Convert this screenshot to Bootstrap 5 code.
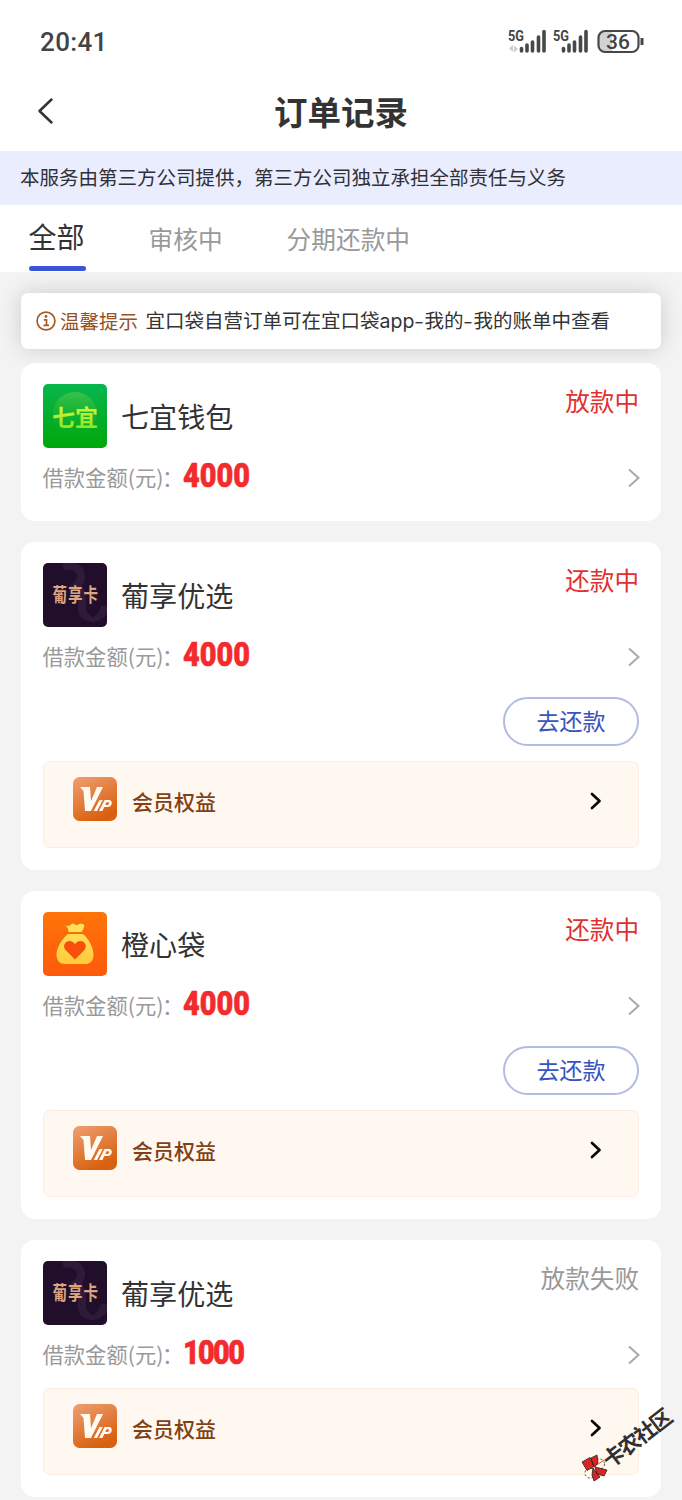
<!DOCTYPE html>
<html lang="zh-CN">
<head>
<meta charset="utf-8">
<meta name="viewport" content="width=device-width, initial-scale=1">
<title>订单记录</title>
<link href="https://cdn.jsdelivr.net/npm/bootstrap@5.3.0/dist/css/bootstrap.min.css" rel="stylesheet">
<style>
body{font-family:"Noto Sans CJK SC",sans-serif;background:#f3f3f3;color:#333;height:1500px;overflow:hidden;line-height:1}
svg{display:block;flex:none}
svg text{font-family:"Noto Sans CJK SC",sans-serif}
.statusbar{height:83px;padding:0 38px 0 40px}
.clock{font:500 26px/1 Roboto,sans-serif;letter-spacing:.35px;color:#444}
.titlebar{height:68px;padding-bottom:12px}
.titlebar h1{font-size:33.5px;font-weight:700;line-height:40px}
.back{left:37px;top:14px}
.notice{height:54px;background:#eaedfe;padding:0 0 2px 20px;font-size:19.5px;color:#303136}
.tabs{height:67px;font-size:24.7px;color:#999;padding-left:28.5px;gap:64px}
.tabs .tab{padding-top:15px;line-height:36px;height:67px}
.tabs .on{font-size:28px;color:#333;padding-top:13px;width:56px}
.tabs .on::after{content:"";display:block;height:5px;border-radius:3px;background:#3c52d8;margin-top:12px;width:57px}
.tip{margin:21px 21px 14px;height:56px;border-radius:7px;box-shadow:0 0 22px rgba(0,0,0,.16);padding:0 0 1px 15px;font-size:19.5px}
.tip .hint{color:#98501f;margin:0 7.5px 0 4px}
.latin{font-family:Inter,"Noto Sans CJK SC",sans-serif}
.dash{display:inline-block;width:10px;text-align:center;transform:scaleX(1.4)}
.orders{padding:0 21px;gap:21px}
.order{border:0;border-radius:14px;padding:21px 22px 22px 21.5px}
.order>.head{height:64px;gap:14.5px}
.name{font-size:28.1px;line-height:63px}
.state{font-size:24.6px;line-height:33px;color:#e13030}
.state.fail{color:#999}
.amount{height:44px;margin-top:7px;font-size:21.3px;color:#999}
.amount .lbl{width:140.5px;white-space:nowrap;margin-top:-1px}
.amount .colon{margin-left:-1.5px}
.amount strong{font:900 34px/1 Roboto,sans-serif;color:#f42a2c;-webkit-text-stroke:.6px #f42a2c;transform:scaleX(.85);transform-origin:0 50%;margin-top:-4px}
.amount .one{letter-spacing:-2px}
.amount .arrow{margin-top:1px;margin-right:-1px}
.repay{margin-top:19px;width:136px;height:49px;border:2px solid #b3bce0;border-radius:25px;color:#3a54bd;font-size:23px;line-height:1;padding:0 0 2px;background:#fff}
.benefit{height:87px;margin-top:12px;border:1.5px solid #fcecdf;border-radius:7px;background:#fff8f1;padding:0 36px 12px 29.5px;color:#824114;font-size:21px;font-weight:500;gap:15px}
.benefit span,.benefit .arrow{margin-top:5px}
.repay+.benefit{margin-top:15px}
.watermark{left:572px;top:1390px}
</style>
</head>
<body class="position-relative">
<svg width="0" height="0" class="position-absolute">
  <defs>
    <linearGradient id="gg" x1="0" y1="0" x2="0" y2="1"><stop stop-color="#08b64e"/><stop offset="1" stop-color="#00a70a"/></linearGradient>
    <linearGradient id="gc" x1="0" y1="0" x2="0" y2="1"><stop stop-color="#5cc94a" stop-opacity=".6"/><stop offset="1" stop-color="#14b22a" stop-opacity="0"/></linearGradient>
    <linearGradient id="gy" x1="0" y1="0" x2="0" y2="1"><stop stop-color="#f5f53a"/><stop offset="1" stop-color="#7ee321"/></linearGradient>
    <linearGradient id="go" x1="0" y1="0" x2="0" y2="1"><stop stop-color="#fe7408"/><stop offset="1" stop-color="#fd5a0c"/></linearGradient>
    <linearGradient id="gb" x1="0" y1="0" x2="0" y2="1"><stop stop-color="#ffe45c"/><stop offset="1" stop-color="#ffcb3c"/></linearGradient>
    <linearGradient id="gv" x1="0" y1="0" x2=".5" y2="1"><stop stop-color="#eea074"/><stop offset="1" stop-color="#d9600f"/></linearGradient>
    <clipPath id="tile"><rect width="64" height="64" rx="5"/></clipPath>
  </defs>
  <symbol id="putao" viewBox="0 0 64 64"><g clip-path="url(#tile)"><path fill="#210e2b" d="M0 0h64v64H0z"/><path d="M20 3c16-3 24 10 13 20 9 5 5 19 6 24 2 12 22 10 23-4" fill="none" stroke="#2e1a39" stroke-width="8"/><path d="M50 43l6 6-6 6-6-6z" fill="#210e2b"/></g></symbol>
  <symbol id="vip" viewBox="0 0 44 44"><rect width="44" height="44" rx="6.500" fill="url(#gv)"/><g fill="#fffaf2"><path d="M7 10h10l1 14 6-14h6L18 34h-6L10.500 14z"/><path d="M26.500 23h3.300l-5.800 11h-3.300z"/><path fill-rule="evenodd" d="M31.500 23h4.500c4 0 4 7-1.700 7h-3l-2 4h-3.300zM33.500 25.300l-1.200 2.600h2c2 0 2.600-2.600.7-2.600z"/></g></symbol>
  <symbol id="next" viewBox="0 0 12 20"><path d="M1 1.500l9.500 8.500L1 18.500" fill="none" stroke="#aaa" stroke-width="2"/></symbol>
  <symbol id="go-on" viewBox="0 0 12 18"><path d="M2 2l7.500 7L2 16" fill="none" stroke="#090909" stroke-width="2.700" stroke-linecap="round" stroke-linejoin="round"/></symbol>
</svg>

<div class="bg-white">
  <div class="statusbar d-flex align-items-center justify-content-between">
    <span class="clock">20:41</span>
    <svg width="137" height="30" viewBox="507 27 137 30">
      <g stroke="#484848" stroke-width="3.600" stroke-linecap="round"><path id="sig" d="M521.500 48.500v2.500M527 45v6M532.500 42v9M538.500 37v14M544 31.500v19.500"/><use href="#sig" x="42"/></g>
      <g font-size="15.500" fill="#444"><text x="508" y="41" textLength="16" lengthAdjust="spacingAndGlyphs" style="font-family:Roboto;font-weight:700">5G</text><text x="553" y="41" textLength="16" lengthAdjust="spacingAndGlyphs" style="font-family:Roboto;font-weight:700">5G</text></g>
      <path d="M509 48.500l4-3.500v7zM518 49l-4 3.500v-7z" fill="#ccc"/>
      <path d="M604 31.500h8v20h-8a5.500 5.500 0 0 1-5.500-5.500v-9a5.500 5.500 0 0 1 5.500-5.500z" fill="#d2d2d2"/>
      <rect x="598.500" y="31" width="40" height="21" rx="6.500" fill="none" stroke="#484848" stroke-width="2.200"/><path d="M640.500 38h3v7h-3z" fill="#484848"/>
      <text x="606" y="49.300" font-size="21" textLength="24" style="font-family:Roboto;font-weight:500" fill="#444">36</text>
    </svg>
  </div>
  <header class="titlebar position-relative d-flex align-items-center justify-content-center">
    <svg class="back position-absolute" width="18" height="28" viewBox="0 0 18 28"><path d="M14.500 2.500L2.500 14l12 11.500" fill="none" stroke="#333" stroke-width="2.500" stroke-linecap="round" stroke-linejoin="round"/></svg>
    <h1 class="m-0">订单记录</h1>
  </header>
</div>
<div class="notice d-flex align-items-center">本服务由第三方公司提供，第三方公司独立承担全部责任与义务</div>
<nav class="tabs d-flex bg-white"><div class="tab on">全部</div><div class="tab">审核中</div><div class="tab">分期还款中</div></nav>

<div class="tip bg-white d-flex align-items-center">
  <svg width="20" height="20" viewBox="0 0 20 20" fill="none" stroke="#a25a28" stroke-width="1.700"><circle cx="10" cy="10" r="8.900"/><path d="M7.800 8.800h2.700v5.500M7.500 14.300h5.500"/><circle cx="10" cy="5.500" r=".6"/></svg>
  <span class="hint">温馨提示</span><span>宜口袋自营订单可在宜口袋<span class="latin">app</span><span class="dash">-</span>我的<span class="dash">-</span>我的账单中查看</span>
</div>

<main class="orders d-flex flex-column">
  <section class="card order">
    <div class="head d-flex">
      <svg width="64" height="64"><rect width="64" height="64" rx="5" fill="url(#gg)"/><circle cx="32" cy="30" r="22" fill="url(#gc)"/><text x="9" y="42" font-size="23" font-weight="700" fill="url(#gy)" textLength="46">七宜</text></svg>
      <span class="name">七宜钱包</span><span class="state ms-auto">放款中</span>
    </div>
    <div class="amount d-flex align-items-center"><span class="lbl">借款金额(元)<span class="colon">：</span></span><strong>4000</strong><svg class="arrow ms-auto" width="12" height="20"><use href="#next"/></svg></div>
  </section>

  <section class="card order">
    <div class="head d-flex">
      <svg width="64" height="64"><use href="#putao"/><text transform="translate(9.500 39) scale(.88 1.150)" font-size="16.500" letter-spacing="1.200" font-weight="700" fill="#dda47f">葡享卡</text></svg>
      <span class="name">葡享优选</span><span class="state ms-auto">还款中</span>
    </div>
    <div class="amount d-flex align-items-center"><span class="lbl">借款金额(元)<span class="colon">：</span></span><strong>4000</strong><svg class="arrow ms-auto" width="12" height="20"><use href="#next"/></svg></div>
    <button class="btn repay align-self-end">去还款</button>
    <div class="benefit d-flex align-items-center"><svg width="44" height="44"><use href="#vip"/></svg><span>会员权益</span><svg class="arrow ms-auto" width="12" height="18"><use href="#go-on"/></svg></div>
  </section>

  <section class="card order">
    <div class="head d-flex">
      <svg width="64" height="64"><rect width="64" height="64" rx="5" fill="url(#go)"/><path d="M22 13q4 2 6-.5 2-2 4 0 2 1.500 4-.5 3-1 5.500 1-.5 4-3 7H25.500q0-4-3.500-7zM25 22h15c5 4 10.500 13 10.500 20.500 0 7-4 9.500-8 9.500H22c-5 0-8.500-3-8.500-9.500C13.500 35 20 26 25 22z" fill="url(#gb)"/><path d="M32 47.500L23 38.500c-6-7 4-13.500 9-6.500 5-7 15-.5 9 6.500z" fill="#f8500c"/></svg>
      <span class="name">橙心袋</span><span class="state ms-auto">还款中</span>
    </div>
    <div class="amount d-flex align-items-center"><span class="lbl">借款金额(元)<span class="colon">：</span></span><strong>4000</strong><svg class="arrow ms-auto" width="12" height="20"><use href="#next"/></svg></div>
    <button class="btn repay align-self-end">去还款</button>
    <div class="benefit d-flex align-items-center"><svg width="44" height="44"><use href="#vip"/></svg><span>会员权益</span><svg class="arrow ms-auto" width="12" height="18"><use href="#go-on"/></svg></div>
  </section>

  <section class="card order">
    <div class="head d-flex">
      <svg width="64" height="64"><use href="#putao"/><text transform="translate(9.500 39) scale(.88 1.150)" font-size="16.500" letter-spacing="1.200" font-weight="700" fill="#dda47f">葡享卡</text></svg>
      <span class="name">葡享优选</span><span class="state fail ms-auto">放款失败</span>
    </div>
    <div class="amount d-flex align-items-center"><span class="lbl">借款金额(元)<span class="colon">：</span></span><strong class="one">1000</strong><svg class="arrow ms-auto" width="12" height="20"><use href="#next"/></svg></div>
    <div class="benefit d-flex align-items-center"><svg width="44" height="44"><use href="#vip"/></svg><span>会员权益</span><svg class="arrow ms-auto" width="12" height="18"><use href="#go-on"/></svg></div>
  </section>
</main>

<svg class="watermark position-absolute" width="110" height="100" viewBox="572 1390 110 100">
  <g stroke="#222" stroke-width=".8"><circle cx="599.500" cy="1464" r="5" fill="#fffbe9" stroke-dasharray="2 2"/><circle cx="590" cy="1473" r="5" fill="#fffbe9" stroke-dasharray="2 2"/><path d="M582 1462l8-4.500 4 9-7 4zM591 1458l6-3 1 8-4 4zM595 1467l12 3-3 6-7-2zM593 1468l7 9-6 4-2-6z" fill="#da2424"/><path d="M594 1467l10-7" stroke="#da2424"/></g>
  <text transform="translate(610 1469) rotate(-37.500)" font-size="21.500" font-weight="700" fill="#303030" textLength="81">卡农社区</text>
</svg>
<script src="https://cdn.jsdelivr.net/npm/bootstrap@5.3.0/dist/js/bootstrap.bundle.min.js"></script>
</body>
</html>
